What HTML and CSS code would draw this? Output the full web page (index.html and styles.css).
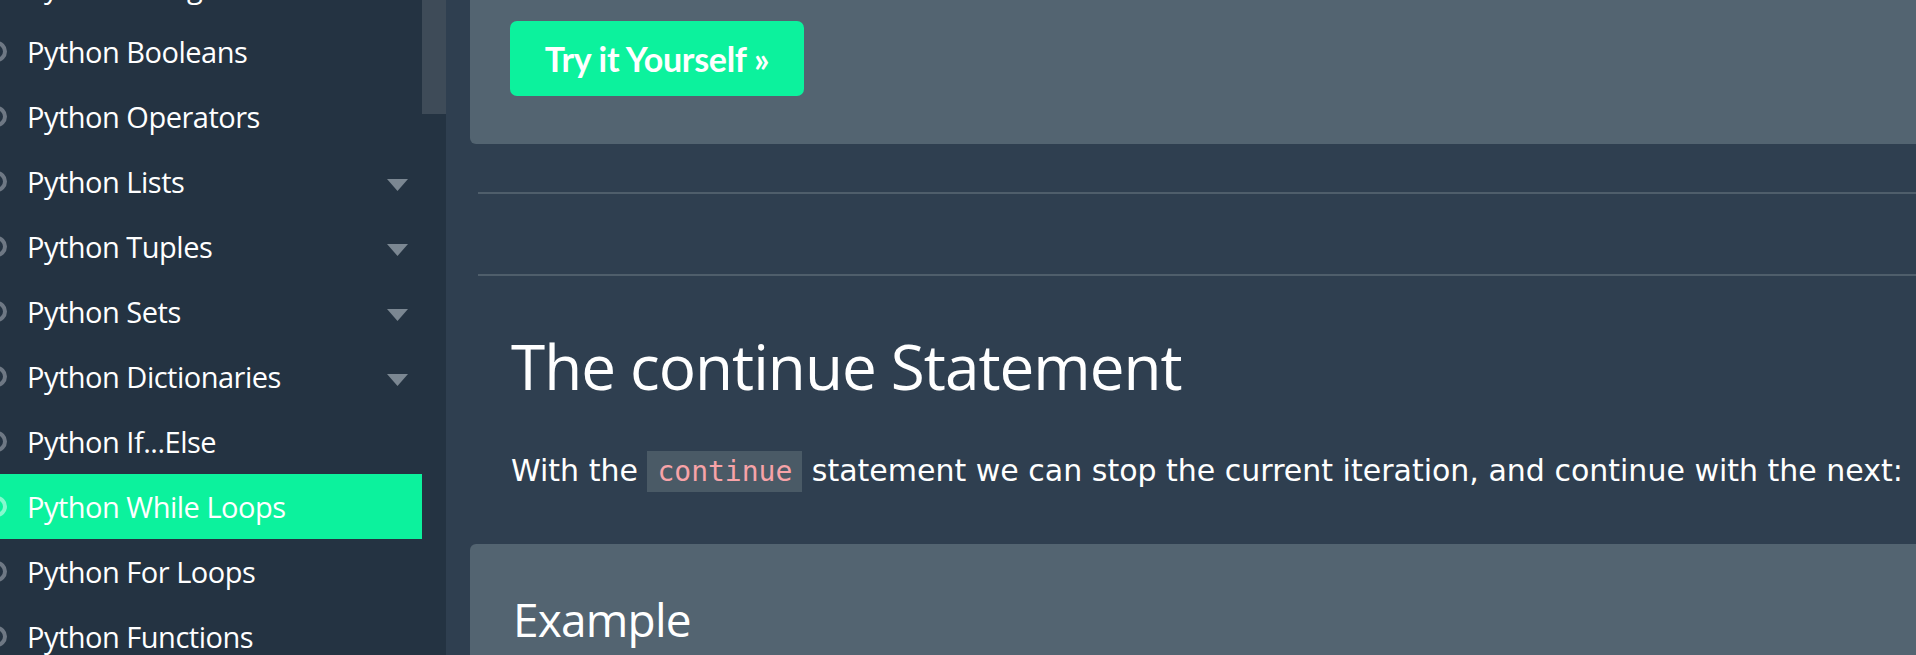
FILE: index.html
```html
<!DOCTYPE html>
<html lang="en">
<head>
<meta charset="utf-8">
<title>Python While Loops</title>
<link rel="stylesheet" href="styles.css">
</head>
<body>
<div class="page">
  <aside class="sidebar">
    <ul class="menu">
      <li class="item"><span class="ring"></span><span class="label">Python Strings</span><svg class="caret" viewBox="0 0 21 12"><polygon points="0,0 21,0 10.5,12"/></svg></li>
      <li class="item"><span class="ring"></span><span class="label">Python Booleans</span></li>
      <li class="item"><span class="ring"></span><span class="label">Python Operators</span></li>
      <li class="item"><span class="ring"></span><span class="label">Python Lists</span><svg class="caret" viewBox="0 0 21 12"><polygon points="0,0 21,0 10.5,12"/></svg></li>
      <li class="item"><span class="ring"></span><span class="label">Python Tuples</span><svg class="caret" viewBox="0 0 21 12"><polygon points="0,0 21,0 10.5,12"/></svg></li>
      <li class="item"><span class="ring"></span><span class="label">Python Sets</span><svg class="caret" viewBox="0 0 21 12"><polygon points="0,0 21,0 10.5,12"/></svg></li>
      <li class="item"><span class="ring"></span><span class="label">Python Dictionaries</span><svg class="caret" viewBox="0 0 21 12"><polygon points="0,0 21,0 10.5,12"/></svg></li>
      <li class="item"><span class="ring"></span><span class="label">Python If...Else</span></li>
      <li class="item active"><span class="ring"></span><span class="label">Python While Loops</span></li>
      <li class="item"><span class="ring"></span><span class="label">Python For Loops</span></li>
      <li class="item"><span class="ring"></span><span class="label">Python Functions</span></li>
    </ul>
    <div class="scrollbar"><div class="thumb"></div></div>
  </aside>
  <main class="main">
    <div class="content">
      <div class="card card-top">
        <a class="btn" href="#">Try it Yourself »</a>
      </div>
      <hr class="rule rule-first">
      <hr class="rule rule-second">
      <h2 class="title">The continue Statement</h2>
      <p class="text">With the <code class="code">continue</code> statement we can stop the current iteration, and continue with the next:</p>
      <div class="card card-example">
        <h3 class="example-title">Example</h3>
      </div>
    </div>
  </main>
</div>
</body>
</html>
```

FILE: styles.css
```css
html, body {
  margin: 0;
  padding: 0;
  height: 655px;
  overflow: hidden;
  background: #2f3f50;
}

.page {
  display: flex;
  height: 655px;
}

.sidebar {
  width: 446px;
  flex: none;
  display: flex;
  background: #243342;
  overflow: hidden;
}

.menu {
  list-style: none;
  margin: -46px 0 0;
  padding: 0;
  width: 422px;
  flex: none;
}

.item {
  height: 65px;
  display: flex;
  align-items: center;
  padding-right: 14px;
  font-family: "Open Sans", sans-serif;
  font-size: 29px;
  letter-spacing: -0.5px;
  color: #ffffff;
}

.ring {
  width: 21px;
  height: 21px;
  box-sizing: border-box;
  border: 4px solid #6e7884;
  border-radius: 50%;
  margin-left: -14px;
  margin-right: 20px;
  flex: none;
}

.label {
  flex: 1;
  white-space: nowrap;
}

.caret {
  width: 21px;
  height: 12px;
  flex: none;
  fill: #7b8792;
  margin-top: 7px;
}

.active {
  background: #0cf29d;
}

.active .ring {
  border-color: rgba(255, 255, 255, 0.5);
}

.scrollbar {
  width: 24px;
  flex: none;
}

.thumb {
  height: 114px;
  background: #3e4b58;
}

.main {
  flex: 1;
  overflow: hidden;
}

.content {
  width: 1600px;
  padding-left: 24px;
}

.card {
  background: #536471;
}

.card-top {
  padding: 21px 40px 48px;
  border-radius: 0 0 6px 6px;
}

.btn {
  display: inline-flex;
  width: 294px;
  height: 75px;
  align-items: center;
  justify-content: center;
  background: #0cf29d;
  color: #ffffff;
  border-radius: 7px;
  font-family: Lato, sans-serif;
  font-weight: 700;
  font-size: 34px;
  letter-spacing: -0.3px;
  text-decoration: none;
}

.rule {
  border: 0;
  height: 2px;
  background: #4f5e6b;
  margin: 48px 0 0 8px;
}

.rule-second {
  margin-top: 80px;
}

.title {
  font-family: "Open Sans", sans-serif;
  font-weight: 400;
  font-size: 62px;
  letter-spacing: -1px;
  line-height: 80px;
  color: #ffffff;
  margin: 50px 0 0 41px;
}

.text {
  font-family: "DejaVu Sans", Verdana, sans-serif;
  font-size: 30px;
  line-height: 45px;
  color: #ffffff;
  margin: 42px 0 0 41px;
  white-space: nowrap;
}

.code {
  font-family: "DejaVu Sans Mono", monospace;
  font-size: 28px;
  color: #f7a3a8;
  background: #4a5a66;
  padding: 4px 10px;
}

.card-example {
  margin-top: 50px;
  padding: 45px 40px 40px;
  border-radius: 6px 6px 0 0;
  height: 200px;
}

.example-title {
  font-family: "Open Sans", sans-serif;
  font-weight: 400;
  font-size: 46px;
  letter-spacing: -0.8px;
  line-height: 60px;
  color: #ffffff;
  margin: 0 0 0 3px;
}
```
